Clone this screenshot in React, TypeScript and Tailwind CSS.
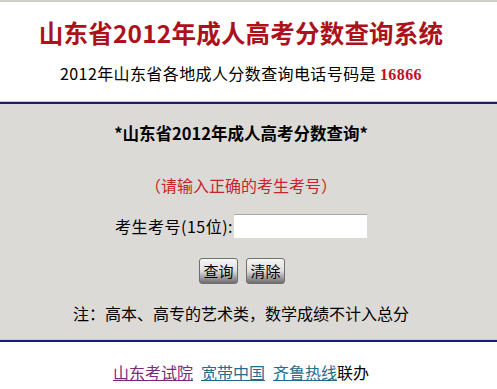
import React from "react";

const btn =
  "h-[26px] w-[39px] rounded-[3px] border border-[#6f6f6f] bg-linear-to-b from-[#f6f6f6] via-[#dedede] to-[#6e6e6e] text-[15px] leading-[22px] text-black";

export default function App() {
  return (
    <div
      className="w-[497px] h-[389px] bg-white flex flex-col"
      style={{ fontFamily: '"Noto Sans CJK SC", "Noto Sans", sans-serif' }}
    >
      <div className="h-[2px] bg-[#cfcfcb]" />
      <div className="h-[99px] flex flex-col items-center pt-[16px] pr-[15px]">
        <div className="h-[30px] leading-[30px] text-[24.5px] font-bold text-[#ad111b] tracking-[0.2px]">
          山东省2012年成人高考分数查询系统
        </div>
        <div className="mt-[15px] h-[20px] leading-[20px] text-[16px] text-black tracking-[0.4px]">
          2012年山东省各地成人分数查询电话号码是{" "}
          <span className="font-bold text-[#c0102a]" style={{ fontFamily: '"Liberation Serif", serif' }}>
            16866
          </span>
        </div>
      </div>
      <div className="h-[1px] bg-[#c4c4ee]" />
      <div className="h-[2px] bg-[#1c1c6c]" />
      <div className="h-[235px] bg-[#dcdad6] flex flex-col items-center pt-[19px] pr-[15px]">
        <div className="h-[20px] leading-[20px] text-[16.5px] font-bold text-black">
          *山东省2012年成人高考分数查询*
        </div>
        <div className="mt-[32px] h-[20px] leading-[20px] text-[16px] text-[#c8242a]">
          （请输入正确的考生考号）
        </div>
        <div className="mt-[19px] h-[24px] flex items-center">
          <span className="text-[16px] leading-[24px] text-black mr-[1px] tracking-[0.5px]">考生考号(15位):</span>
          <input
            className="w-[133px] h-[24px] bg-white border-t border-[#a8a8a8] outline-none"
            type="text"
          />
        </div>
        <div className="mt-[20px] h-[26px] flex gap-[8px] ml-[2px]">
          <button className={btn}>查询</button>
          <button className={btn}>清除</button>
        </div>
        <div className="mt-[19px] h-[20px] leading-[20px] text-[16px] text-black">
          注：高本、高专的艺术类，数学成绩不计入总分
        </div>
      </div>
      <div className="h-[1px] bg-[#c4c4ee]" />
      <div className="h-[2px] bg-[#1c1c6c]" />
      <div className="mt-[20px] h-[20px] leading-[20px] text-[16px] flex justify-center pr-[15px]">
        <a className="underline text-[#7a2a7a]" href="#">山东考试院</a>
        <a className="underline text-[#1f6c8c] ml-[8px]" href="#">宽带中国</a>
        <a className="underline text-[#1f6c8c] ml-[8px]" href="#">齐鲁热线</a>
        <span className="text-black">联办</span>
      </div>
    </div>
  );
}
